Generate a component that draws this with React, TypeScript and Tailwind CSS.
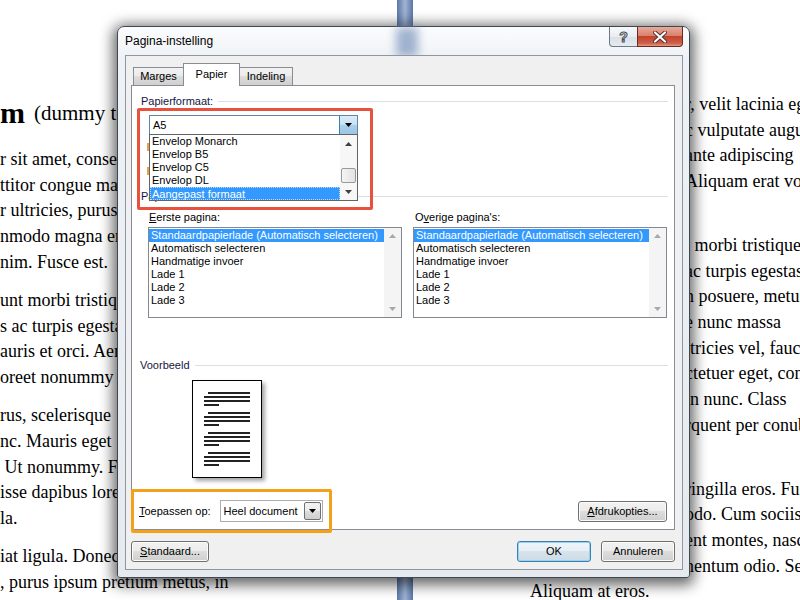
import React from 'react';

const LEFT_PARAGRAPHS: string[][] = [
  ['r sit amet, consectetuer', 'ttitor congue massa', 'r ultricies, purus lectus', 'nmodo magna eros', 'nim. Fusce est.'],
  ['unt morbi tristique', 's ac turpis egestas', 'auris et orci. Aenean', 'oreet nonummy'],
  ['rus, scelerisque', 'nc. Mauris eget  neque', ' Ut nonummy. Fusce', 'isse dapibus lorem', 'la.'],
  ['iat ligula. Donec', ', purus ipsum pretium metus, in'],
];

const RIGHT_PARAGRAPHS: string[][] = [
  ['r, velit lacinia egestas', 'c vulputate augue', 'ante adipiscing', 'Aliquam erat volutpat', ''],
  ['t morbi tristique', 'ac turpis egestas', 'n posuere, metus', 'e nunc massa', 'ltricies vel, faucibus', 'ctetuer eget, congue', 'in nunc. Class', 'rquent per conubia', ''],
  ['ringilla eros. Fusce', 'odo. Cum sociis', 'ent montes, nascetur', 'nentum odio. Sed'],
];

const PAPER_SIZES = ['Envelop Monarch', 'Envelop B5', 'Envelop C5', 'Envelop DL', 'Aangepast formaat'];
const TRAYS = [
  'Standaardpapierlade (Automatisch selecteren)',
  'Automatisch selecteren',
  'Handmatige invoer',
  'Lade 1',
  'Lade 2',
  'Lade 3',
];

function DocumentBackground() {
  return (
    <div className="flex h-full font-['Liberation_Serif','Times_New_Roman',serif] text-[18px] leading-[25.7px] text-black">
      <div className="w-[397px] shrink-0 overflow-hidden whitespace-pre">
        <div className="mt-[96px] flex h-[34px] items-center">
          <span className="text-[30px] font-bold leading-none">m</span>
          <span className="ml-[9px] text-[21px] leading-none">(dummy tekst)</span>
        </div>
        <div className="mt-[17px]">
          {LEFT_PARAGRAPHS.map((para, i) => (
            <div key={i} className="mb-[12.5px]">
              {para.map((line, j) => (
                <div key={j} className="h-[25.7px]">{line}</div>
              ))}
            </div>
          ))}
        </div>
      </div>
      <div className="w-[16px] shrink-0 bg-[linear-gradient(90deg,#5b77a6,#9fb3d4_50%,#5b77a6)]" />
      <div className="flex-1 overflow-hidden whitespace-pre pt-[92px]">
        {RIGHT_PARAGRAPHS.map((para, i) => (
          <div key={i} className="mb-[12.5px]">
            {para.map((line, j) => (
              <div key={j} className="h-[25.7px] pl-[272px]">{line}</div>
            ))}
            {i === RIGHT_PARAGRAPHS.length - 1 && (
              <div className="h-[25.7px] pl-[117px]">Aliquam at eros.</div>
            )}
          </div>
        ))}
      </div>
    </div>
  );
}

function DropArrow({ color = '#000' }: { color?: string }) {
  return (
    <svg width="7" height="4" viewBox="0 0 7 4">
      <path d="M0 0h7L3.5 4z" fill={color} />
    </svg>
  );
}

function UpArrow({ color = '#000' }: { color?: string }) {
  return (
    <svg width="7" height="4" viewBox="0 0 7 4">
      <path d="M0 4h7L3.5 0z" fill={color} />
    </svg>
  );
}

function WinButton({
  children,
  className = '',
  isDefault = false,
}: {
  children: React.ReactNode;
  className?: string;
  isDefault?: boolean;
}) {
  return (
    <div
      className={`flex h-[21px] items-center justify-center rounded-[3px] border text-[11px] text-black ${
        isDefault
          ? 'border-[#3c7fb1] bg-[linear-gradient(#eef5fa_0%,#e6eff5_50%,#d6e3ec_50%,#ccdbe6_100%)] shadow-[inset_0_0_0_1px_#9ad3f2]'
          : 'border-[#707070] bg-[linear-gradient(#f2f2f2_0%,#ebebeb_50%,#dddddd_50%,#cfcfcf_100%)] shadow-[inset_0_0_0_1px_#fbfbfb]'
      } ${className}`}
    >
      {children}
    </div>
  );
}

function GroupHeader({ label, className = '', pl = 'pl-[9px]' }: { label: React.ReactNode; className?: string; pl?: string }) {
  return (
    <div className={`flex h-[14px] items-center pr-[6px] ${pl} ${className}`}>
      <span className="leading-[14px] text-[#15153f]">{label}</span>
      <div className="ml-[5px] h-px flex-1 bg-[#d5dfe5]" />
    </div>
  );
}

function TrayList() {
  return (
    <div className="mt-[3px] flex h-[91px] w-[254px] border border-[#828790] bg-white">
      <div className="flex-1 pt-px">
        {TRAYS.map((t, i) => (
          <div
            key={t}
            className={`h-[13px] whitespace-nowrap pl-[2px] leading-[13px] ${i === 0 ? 'bg-[#3399ff] text-white' : ''}`}
          >
            {t}
          </div>
        ))}
      </div>
      <div className="flex w-[17px] flex-col items-center justify-between bg-[#f4f4f4] py-[6px]">
        <UpArrow color="#a8a8a8" />
        <DropArrow color="#a8a8a8" />
      </div>
    </div>
  );
}

function PreviewParagraph() {
  return (
    <div className="flex flex-col gap-[2px]">
      <div className="ml-[4px] h-[2px] w-[42px] bg-[#222]" />
      <div className="h-[2px] w-[46px] bg-[#222]" />
      <div className="h-[2px] w-[46px] bg-[#222]" />
      <div className="h-[2px] w-[15px] bg-[#222]" />
    </div>
  );
}

function PaperSizeDropdown() {
  return (
    <div className="absolute left-[17px] top-[48px] z-10 flex h-[67px] w-[209px] border border-[#646464] bg-white">
      <div className="flex-1">
        {PAPER_SIZES.map((s, i) => (
          <div
            key={s}
            className={`h-[13px] whitespace-nowrap pl-[1px] leading-[13px] ${
              i === PAPER_SIZES.length - 1 ? 'border border-dotted border-[#c2dcf7] bg-[#3399ff] leading-[11px] text-white' : 'pl-[2px]'
            }`}
          >
            {s}
          </div>
        ))}
      </div>
      <div className="flex w-[17px] flex-col bg-[#f7f7f7]">
        <div className="flex h-[17px] items-center justify-center">
          <UpArrow color="#404040" />
        </div>
        <div className="flex-1 pt-[16px]">
          <div className="mx-px h-[15px] rounded-[2px] border border-[#9a9a9a] bg-[linear-gradient(90deg,#f4f4f4,#e2e2e2)]" />
        </div>
        <div className="flex h-[17px] items-center justify-center">
          <DropArrow color="#404040" />
        </div>
      </div>
    </div>
  );
}

function CaptionButtons() {
  return (
    <div className="absolute right-[6px] top-0 flex h-[20px]">
      <div className="flex w-[29px] items-center justify-center rounded-bl-[4px] border border-t-0 border-[#6f7782] bg-[linear-gradient(#f7f9fb_0%,#e8edf2_50%,#d8dfe7_50%,#e6ebf0_100%)]">
        <span className="text-[14px] font-bold leading-none text-white [-webkit-text-stroke:1px_#4b4f55]">?</span>
      </div>
      <div className="-ml-px flex w-[46px] items-center justify-center rounded-br-[4px] border border-t-0 border-[#6b2a22] bg-[linear-gradient(#e9a99a_0%,#d9826e_45%,#c4432d_50%,#cd5f47_85%,#e39a85_100%)]">
        <svg width="14" height="12" viewBox="0 0 14 12">
          <path d="M2 1.5l10 9M12 1.5l-10 9" stroke="#4a3430" strokeWidth="4" strokeLinecap="round" />
          <path d="M2 1.5l10 9M12 1.5l-10 9" stroke="#ffffff" strokeWidth="2.2" strokeLinecap="round" />
        </svg>
      </div>
    </div>
  );
}

function PaperTab() {
  return (
    <div className="relative h-[445px] w-[544px] border border-[#898c95] bg-white text-[11px] text-black">
      <GroupHeader label="Papierformaat:" className="mt-[8px]" />

      <div className="ml-[17px] mt-[7px] flex h-[20px] w-[209px] border border-[#5a86b0] bg-white">
        <span className="flex-1 pl-[3px] leading-[18px]">A5</span>
        <div className="flex w-[18px] items-center justify-center border-l border-[#3c7fb1] bg-[linear-gradient(#dcecf8_0%,#c6e0f3_50%,#a9cfea_50%,#9cc6e4_100%)]">
          <DropArrow />
        </div>
      </div>

      {/* labels of the custom size fields, hidden behind the open list */}
      <div className="absolute left-[15px] top-[57px] h-[8px] w-[2px] bg-[#e6a34a]" />
      <div className="absolute left-[15px] top-[81px] h-[8px] w-[2px] bg-[#e6a34a]" />

      <GroupHeader label="Papierlade" className="mt-[54px]" />

      <div className="mt-[7px] flex">
        <div className="ml-[16px] w-[254px]">
          <div className="h-[14px] pl-[1px] leading-[14px]">
            <span className="underline">E</span>erste pagina:
          </div>
          <TrayList />
        </div>
        <div className="ml-[11px] w-[254px]">
          <div className="h-[14px] pl-[2px] leading-[14px]">
            O<span className="underline">v</span>erige pagina's:
          </div>
          <TrayList />
        </div>
      </div>

      <GroupHeader label="Voorbeeld" className="mt-[40px]" pl="pl-[8px]" />

      <div className="ml-[60px] mt-[8px] flex h-[98px] w-[70px] flex-col gap-[6px] border border-black bg-white pl-[11px] pt-[11px] shadow-[3px_3px_4px_rgba(0,0,0,0.35)]">
        <PreviewParagraph />
        <PreviewParagraph />
        <PreviewParagraph />
        <PreviewParagraph />
      </div>

      <div className="mt-[22px] flex h-[22px] items-center pl-[7px] pr-[7px]">
        <span>
          <span className="underline">T</span>oepassen op:
        </span>
        <div className="ml-[9px] flex h-[22px] w-[103px] items-center border border-[#abadb3] bg-white">
          <span className="flex-1 pl-[3px]">Heel document</span>
          <div className="mr-px flex h-[18px] w-[17px] items-center justify-center rounded-[2px] border border-[#707070] bg-[linear-gradient(#f2f2f2_0%,#ebebeb_50%,#dddddd_50%,#cfcfcf_100%)]">
            <DropArrow />
          </div>
        </div>
        <WinButton className="ml-auto mt-px w-[89px]">
          <span className="underline">A</span>fdrukopties...
        </WinButton>
      </div>

      <PaperSizeDropdown />

      {/* callout frames */}
      <div className="pointer-events-none absolute left-[5px] top-[22px] z-20 h-[102px] w-[236px] rounded-[2px] border-[3px] border-[#e8513d]" />
      <div className="pointer-events-none absolute left-[-1px] top-[403px] z-20 h-[44px] w-[201px] rounded-[2px] border-[3px] border-[#f5a01a]" />
    </div>
  );
}

function PageSetupDialog() {
  return (
    <div className="absolute left-[117px] top-[26px] h-[552px] w-[573px] rounded-b-[3px] rounded-t-[7px] border border-[#3f4750] bg-[linear-gradient(180deg,#fbfcfd_0%,#eef1f5_6%,#e6eaef_100%)] font-['Liberation_Sans',Arial,sans-serif] shadow-[0_3px_14px_4px_rgba(0,0,0,0.6)]">
      {/* the glass frame lets the blue page gap through */}
      <div className="absolute left-[278px] top-0 h-[30px] w-[22px] bg-[#7d95bd] opacity-70 blur-[5px]" />
      <div className="relative flex h-[28px] items-center pl-[7px] text-[12px] text-black">Pagina-instelling</div>
      <CaptionButtons />

      <div className="relative ml-[7px] flex h-[515px] w-[558px] flex-col border border-[#8d97a3] bg-[#f0f0f0] pl-[5px] pt-[7px]">
        <div className="relative z-10 flex h-[22px] items-end pl-[2px] text-[11px] text-black">
          <div className="flex h-[18px] w-[51px] items-center justify-center border border-b-0 border-[#898c95] bg-[linear-gradient(#f2f2f2_0%,#ebebeb_50%,#dddddd_50%,#cfcfcf_100%)]">
            Marges
          </div>
          <div className="-mb-px -ml-px flex h-[23px] w-[57px] items-center justify-center border border-b-0 border-[#898c95] bg-white pb-px">
            Papier
          </div>
          <div className="-ml-px flex h-[18px] w-[54px] items-center justify-center border border-b-0 border-[#898c95] bg-[linear-gradient(#f2f2f2_0%,#ebebeb_50%,#dddddd_50%,#cfcfcf_100%)]">
            Indeling
          </div>
        </div>

        <PaperTab />

        <div className="mt-[11px] flex w-[544px]">
          <WinButton className="w-[78px]">
            <span className="underline">S</span>tandaard...
          </WinButton>
          <WinButton isDefault className="ml-auto w-[74px]">
            OK
          </WinButton>
          <WinButton className="ml-[10px] w-[74px]">Annuleren</WinButton>
        </div>
      </div>
    </div>
  );
}

export default function App() {
  return (
    <div className="relative h-[600px] w-[800px] overflow-hidden bg-white">
      <DocumentBackground />
      <PageSetupDialog />
    </div>
  );
}
